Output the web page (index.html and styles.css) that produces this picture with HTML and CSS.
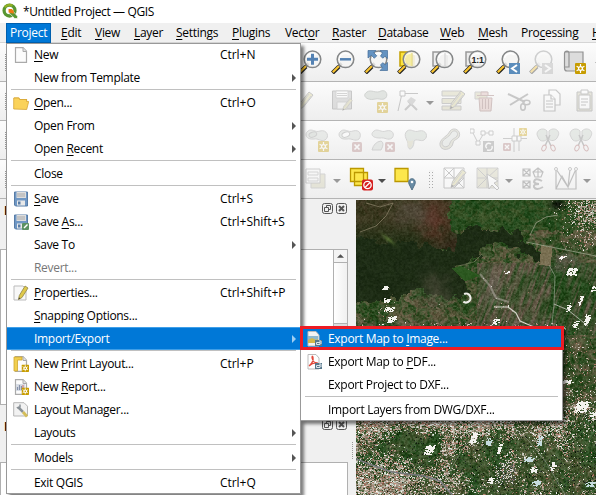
FILE: index.html
```html
<!DOCTYPE html>
<html lang="en">
<head>
<meta charset="utf-8">
<title>*Untitled Project — QGIS</title>
<link rel="stylesheet" href="styles.css">
</head>
<body>
<svg class="defs" width="0" height="0">
  <defs>
    <symbol id="lens" viewBox="0 0 24 24">
      <path d="M1.500 23 8 16.500" stroke="#222" stroke-width="4"/><path d="M1.800 22.200 8 16" stroke="#f8c431" stroke-width="2.200"/>
      <path d="M8 16l2.600-2.600" stroke="#222" stroke-width="3"/>
      <circle cx="14.500" cy="9.300" r="8.300" fill="#f5f5f4" fill-opacity=".88" stroke="#858788" stroke-width="1.500"/>
      <path d="M8.500 8c1-4 6-6 10-3" fill="none" stroke="#fff" stroke-width="1.500"/>
    </symbol>
    <symbol id="star" viewBox="0 0 11 11">
      <rect width="11" height="11" rx="1" fill="#c79c00"/>
      <path d="M5.500 1v9M1.600 3.200l7.800 4.600M9.400 3.200 1.600 7.800" stroke="#fff" stroke-width="1.200"/><circle cx="5.500" cy="5.500" r="2.500" fill="#fff"/><circle cx="5.500" cy="5.500" r="1.200" fill="#c79c00"/>
    </symbol>
    <symbol id="cross" viewBox="0 0 10 10">
      <rect width="10" height="10" rx="1.500" fill="#b08080"/><path d="M2.500 2.500l5 5M7.500 2.500l-5 5" stroke="#fff" stroke-width="1.700"/>
    </symbol>
    <symbol id="pencil" viewBox="0 0 20 20">
      <path d="M1 19l1.500-6L12 1l4 3L6.500 16z" fill="#d5cf90" stroke="#777" stroke-width="1"/><path d="M3 15l9-12M5 17l9-12" stroke="#999" fill="none"/><path d="M1 19l.8-3 2 1.600z" fill="#333"/>
    </symbol>
    <symbol id="caret" viewBox="0 0 8 4"><path d="M0 0h8L4 4z" fill="currentColor"/></symbol>
    <symbol id="page" viewBox="0 0 16 16"><path d="M2.500 .7h7.500l3.500 3.600v11H2.500z" fill="#fcfcfc" stroke="#aaa" stroke-width="1.200"/><path d="M10 .7v3.800h3.500" fill="#e3e3e3" stroke="#aaa"/></symbol>
    <symbol id="floppy" viewBox="0 0 16 16">
      <path d="M1.500 1h13v14h-12l-1-1z" fill="#6f97c4" stroke="#587ca6"/><rect x="3.500" y="1" width="9.500" height="6" fill="#ddd"/><path d="M4 3h8M4 5h8" stroke="#aaa"/><rect x="4" y="9.500" width="8" height="5" fill="#e9e9e9"/><rect x="5" y="10.500" width="2.500" height="3" fill="#587ca6"/>
    </symbol>
    <symbol id="stamp" viewBox="0 0 8 8"><path d="M0 1h7v6H0z" fill="#56768a"/><path d="M1.500 3.500h3.500v2H1.500zM4 2h2v3" fill="none" stroke="#dce6eb"/></symbol>
  </defs>
</svg>

<div class="window">
  <header class="titlebar">
    <svg class="logo" viewBox="0 0 17 17"><circle cx="8" cy="8" r="5.800" fill="none" stroke="#589632" stroke-width="3.500"/><path d="M3 4.500a6 6 0 0 1 8-1.500" fill="none" stroke="#93b023" stroke-width="2.500"/><path d="M8 8h3l5.500 6v2.500h-3L8 11z" fill="#589632" stroke="#fff" stroke-width=".7"/><path d="M7 6.500h3.500l2 2v3L7 10z" fill="#ee7913"/></svg>
    <span>*Untitled Project — QGIS</span>
  </header>
  <nav class="menubar">
    <span class="current">Project</span><span><u>E</u>dit</span><span><u>V</u>iew</span><span><u>L</u>ayer</span><span><u>S</u>ettings</span><span><u>P</u>lugins</span><span>Vect<u>o</u>r</span><span><u>R</u>aster</span><span><u>D</u>atabase</span><span><u>W</u>eb</span><span><u>M</u>esh</span><span>Pro<u>c</u>essing</span><span><u>H</u>elp</span>
  </nav>

  <div class="toolbar first">
    <i class="grip"></i>
    <svg viewBox="0 0 24 24"><use href="#lens"/><path d="M9 9.300h11M14.500 3.800v11" stroke="#5482b3" stroke-width="3"/></svg>
    <svg viewBox="0 0 24 24"><use href="#lens"/><path d="M9 9.300h11" stroke="#5482b3" stroke-width="2.500"/></svg>
    <svg viewBox="0 0 24 24"><use href="#lens"/><g fill="#6593c1" stroke="#426c98" stroke-width=".7"><path d="M4 .5h8L9.800 2.800l3 3-2.500 2.500-3-3L4 8z"/><path d="M23.500.5v8L21.200 6.200l-2.500 2-2.200-2.200 2-3L16 .5z"/><path d="M23.500 20.500v-8l-2.300 2.200-2.500-2-2.200 2.200 2 3-2.500 2.600z"/></g></svg>
    <svg viewBox="0 0 24 24"><path d="M3 2h14v14H3z" fill="#fde43f" stroke="#c4a000" stroke-width="1.500"/><use href="#lens"/><path d="M15 3v13" stroke="#d7c970"/><path d="M9 5l6-2v13q-7-1-7-7z" fill="#f5e887" opacity=".65"/></svg>
    <svg viewBox="0 0 24 24"><path d="M3 2h14v14H3z" fill="#eee" stroke="#999" stroke-width="1.500"/><use href="#lens"/><path d="M15 3v13" stroke="#ccc"/></svg>
    <svg viewBox="0 0 24 24"><path d="M3 2h14v14H3z" fill="#ececec" stroke="#999" stroke-width="1.500"/><use href="#lens"/><text class="ratio" x="14.600" y="13" text-anchor="middle">1:1</text></svg>
    <svg viewBox="0 0 24 24"><use href="#lens"/><path d="M13 13h11v11H13z" fill="#5b8dbc"/><path d="M21 15l-5 3.500 5 3.500" fill="none" stroke="#fff" stroke-width="2"/></svg>
    <svg class="off" viewBox="0 0 24 24"><use href="#lens"/><path d="M13 13h11v11H13z" fill="#aaa"/><path d="M16 15l5 3.500-5 3.500" fill="none" stroke="#fff" stroke-width="2"/></svg>
    <svg viewBox="0 0 24 24"><path d="M3 2h18v19H5q-2.500 0-2.500-3V3.500Q2.500 1 5 1q2 0 2 2.500V17H3" fill="#dcdcdc" stroke="#929292" stroke-width="1.200"/><use href="#star" x="13" y="13" width="11" height="11"/></svg>
    <svg class="caret" viewBox="0 0 8 4"><use href="#caret"/></svg>
  </div>

  <div class="toolbar second">
    <i class="grip"></i>
    <svg class="off" viewBox="0 0 24 24"><use href="#pencil" x="-1" y="2" width="20" height="20"/></svg>
    <svg class="off" viewBox="0 0 24 24"><path d="M1.500 2h19v18h-19z" fill="#b5b5b5" stroke="#777"/><path d="M5 2h12v7H5z" fill="#fff" stroke="#999"/><path d="M6 4.500h10M6 6.500h10M6 13h10v7H6z" stroke="#999" fill="#eee"/><use href="#pencil" x="11" y="9" width="13" height="13"/></svg>
    <svg class="off" viewBox="0 0 24 24"><path d="M3 3C7 0 12 5 17 2c6-2 8 6 3 8-3 1-6-1-9 0C4 12-3 7 3 3z" fill="#bbc3bb" stroke="#8b928b"/><use href="#star" x="13" y="13" width="11" height="11"/></svg>
    <svg class="off" viewBox="0 0 24 24"><path d="M5 4.500h16M5 4.500 1 22" stroke="#777" fill="none"/><path d="M3 2h5v5H3z" fill="#fff" stroke="#777"/><path d="M8 21 17 12M11 12l9 9" stroke="#888" stroke-width="2"/><path d="M10 12l4-4 5 3-4 5z" fill="#aaa"/></svg>
    <svg class="caret" viewBox="0 0 8 4"><use href="#caret"/></svg>
    <svg class="off" viewBox="0 0 24 24"><path d="M1 2h19v5H1zM1 9.500h19v5H1zM1 17h19v4H1z" fill="#d0cca6" stroke="#888"/><use href="#pencil" x="8" y="1" width="20" height="20"/></svg>
    <svg class="off" viewBox="0 0 24 24"><path d="M1 3h12v7H1z" fill="#cfcba6" stroke="#999"/><path d="M3 6.500h17M7 6V3h7v3M5 9h13l-1 13H6z" fill="#d8b3ae" stroke="#946b68"/><path d="M8.500 10v10M11.500 10v10M14.500 10v10" stroke="#946b68"/></svg>
    <svg class="off" viewBox="0 0 24 24"><path d="M1 5l17 8M3 16l18-11" stroke="#777" stroke-width="2"/><ellipse cx="19.500" cy="13.500" rx="3.500" ry="2.200" fill="none" stroke="#777" stroke-width="1.500"/><ellipse cx="16" cy="18" rx="2.300" ry="3.200" fill="none" stroke="#777" stroke-width="1.500"/></svg>
    <svg class="off" viewBox="0 0 24 24"><g fill="#fff" stroke="#777" stroke-width="1.200"><path d="M9 1h7l4 4v11H9z"/><path d="M4 6h7l4 4v12H4z"/><path d="M11 6v4h4M6 12h7M6 15h7M6 18h7"/></g></svg>
    <svg class="off" viewBox="0 0 24 24"><path d="M4 3h15v19H4z" fill="#c9c6ad" stroke="#777"/><path d="M6 6h11v14H6zM8 1h7v4H8z" fill="#fff" stroke="#777"/><path d="M8 10h7M8 13h7M8 16h5" stroke="#777"/></svg>
  </div>

  <div class="toolbar third">
    <i class="grip"></i>
    <svg class="off" viewBox="0 0 24 24"><path d="M3 3c4-3 7 2 12 0 7-2 10 6 5 9-4 2-7-2-11-1C1 12-1 6 3 3z" fill="#ccd1cc" stroke="#999"/><ellipse cx="8" cy="6.500" rx="4" ry="2.500" fill="#bdc5bd" stroke="#8b8b8b" transform="rotate(-20 8 7)"/><use href="#star" x="13" y="13" width="11" height="11"/></svg>
    <svg class="off" viewBox="0 0 24 24"><path d="M3 3c4-3 7 2 12 0 7-2 9 4 6 8-4 3-7-1-12 0C1 12-1 6 3 3z" fill="#ccd1cc" stroke="#999"/><ellipse cx="8" cy="6.500" rx="4" ry="2.500" fill="#fff" stroke="#8b8b8b" transform="rotate(-20 8 7)"/><use href="#cross" x="14" y="14" width="10" height="10"/></svg>
    <svg class="off" viewBox="0 0 24 24"><path d="M3 3c4-3 7 2 12 0 7-2 9 4 6 7-4 3-7-1-12 0C1 10-1 6 3 3zM1 22q2-8 9-9 4 2 0 9z" fill="#ccd1cc" stroke="#999"/><use href="#cross" x="14" y="14" width="10" height="10"/></svg>
    <svg class="off" viewBox="0 0 24 24"><path d="M3 3c4-3 7 2 12 0 7-2 10 6 5 9-3 2-8-2-10 1 0 8-6 11-6 4 1-4-6-9-1-14z" fill="#c5cec5" stroke="#999"/><path d="M3 11q2 4 6 1c0 8-5 10-5 6z" fill="#ccc8aa"/></svg>
    <svg class="off" viewBox="0 0 24 24"><path d="M13 3c4-5 12 0 9 6-2 3-5 2-6 6-1 8-14 9-13 0 2-6 7-6 10-12z" fill="#c9c9b5" stroke="#888"/><path d="M14 5c4-5 8 0 6 3-2 3-5 2-7 7-1 5-8 5-8 0 1-5 7-5 9-10z" fill="#d8ddd8" stroke="#888"/></svg>
    <svg class="off" viewBox="0 0 24 24"><path d="M2 3l6 12 6-10h8" fill="none" stroke="#888"/><path d="M0 1h4v4H0zM6 13h4v4H6zM11 3h4v4h-4zM19 3h4v4h-4z" fill="#fff" stroke="#888"/><path d="M13 13h11v11H13z" fill="#888"/><path d="M21 16c-4-3-7 3-4 4m0 2c4 1 6-1 5-4" fill="none" stroke="#fff" stroke-width="1.500"/></svg>
    <svg class="off" viewBox="0 0 24 24"><path d="M11 0v24M0 10.500h24M16 10v13" stroke="#888" fill="none"/><path d="M9 8h5v5H9zM14 8h4v5h-4z" fill="#fff" stroke="#888"/><use href="#star" x="16" y="0" width="8" height="8"/><use href="#cross" x="0" y="15" width="8" height="8"/></svg>
    <svg class="off" viewBox="0 0 24 24"><path d="M11 3C7-2-2 3 2 9c2 6 8 4 9 2zM13 3c5-5 12 0 9 5-2 6-8 5-9 3z" fill="#c6cfc6" stroke="#999"/><path d="M10 7l5 11M14 7 9 18" stroke="#777" stroke-width="1.500"/><ellipse cx="8" cy="20" rx="2" ry="3" fill="none" stroke="#a66" transform="rotate(25 8 20)"/><ellipse cx="17" cy="20" rx="2" ry="3" fill="none" stroke="#a66" transform="rotate(-25 17 20)"/></svg>
    <svg class="off" viewBox="0 0 24 24"><path d="M11 3C7-2-2 3 2 9c2 6 8 4 9 2zM13 3c5-5 12 0 9 5-2 6-8 5-9 3z" fill="#c6cfc6" stroke="#999"/><path d="M10 7l5 11M14 7 9 18" stroke="#777" stroke-width="1.500"/><ellipse cx="8" cy="20" rx="2" ry="3" fill="none" stroke="#a66" transform="rotate(25 8 20)"/><ellipse cx="17" cy="20" rx="2" ry="3" fill="none" stroke="#a66" transform="rotate(-25 17 20)"/></svg>
  </div>

  <div class="toolbar fourth">
    <i class="grip"></i>
    <svg class="off" viewBox="0 0 24 24"><path d="M7 7h14v14H7z" fill="#ccc9a8" stroke="#999"/><path d="M2 2h14v14H2z" fill="#f6f6f6" stroke="#888"/><path d="M4 5h10v3H4zM4 11h10v3H4z" fill="none" stroke="#999"/></svg>
    <svg class="caret dim" viewBox="0 0 8 4"><use href="#caret"/></svg>
    <svg viewBox="0 0 24 24"><path d="M1.500 1.500h13v13h-13zM5.500 5.500h13v13h-13z" fill="#fde74c" stroke="#bb9800" stroke-width="1.300"/><rect x="13" y="12.500" width="11" height="11" rx="2" fill="#d51f1f"/><circle cx="18.500" cy="18" r="3.700" fill="none" stroke="#fff" stroke-width="1.300"/><path d="M16 20.500l5-5" stroke="#fff" stroke-width="1.300"/></svg>
    <svg class="caret" viewBox="0 0 8 4"><use href="#caret"/></svg>
    <svg viewBox="0 0 24 24"><path d="M2 1.500h13v13H2z" fill="#fde74c" stroke="#bb9800" stroke-width="1.300"/><path d="M19 23l-3-6c-2-7 8-7 6 0z" fill="#698ca5" stroke="#527188"/><circle cx="19" cy="15" r="1.300" fill="#fff"/></svg>
    <i class="dots"></i>
    <svg class="off" viewBox="0 0 24 24"><path d="M1 1h20v20H1zM1 11h20M11 1v20M1 1l20 20M11 1 1 11M21 11 11 21" fill="#fff" stroke="#777"/><use href="#pencil" x="7" y="1" width="20" height="21"/></svg>
    <svg class="off" viewBox="0 0 24 24"><path d="M1 1h21v20H1z" fill="#cecbad" stroke="#999"/><path d="M1 11h21M11 1v20M1 1l10 10L22 1M1 21l10-10" stroke="#888"/><path d="M11 7l2 15 3-4 5 5 2-2-5-5 4-2z" fill="#fff" stroke="#777"/></svg>
    <svg class="caret dim" viewBox="0 0 8 4"><use href="#caret"/></svg>
    <svg class="off" viewBox="0 0 24 24"><path d="M2 2h7v7H2zM2 2l7 7M9 2 2 9M2 14h7v7H2zM2 14l7 7M9 14l-7 7M17 1l5 4-2 5h-6l-2-5zM17 1v9M12 5h10" fill="none" stroke="#666" stroke-width="1.200"/><path d="M21 14q-7-4-8 1 1 2 5 2-6 0-5 3 2 4 9 0" fill="none" stroke="#777" stroke-width="2"/></svg>
    <svg class="off" viewBox="0 0 24 24"><path d="M2 2v20h20V2L14 20 2 2M2 22 8 9l6 11 2-18" fill="none" stroke="#666" stroke-width="1.200"/><g fill="#fff" stroke="#777"><circle cx="2" cy="2" r="1.500"/><circle cx="16" cy="2" r="1.500"/><circle cx="22" cy="2" r="1.500"/></g></svg>
    <svg class="caret dim" viewBox="0 0 8 4"><use href="#caret"/></svg>
  </div>

  <main class="workspace">
    <div class="docks">
      <section class="dock upper">
        <div class="dock-title"><b>Layers</b><svg class="float" viewBox="0 0 25 11"><g fill="none" stroke="#555"><rect x=".5" y=".5" width="10" height="10" rx="2"/><path d="M4.500 4V2.500h4v4H7M2.500 4.500h4v4h-4z"/><rect x="14.500" y=".5" width="10" height="10" rx="2"/><path d="M17 3l5 5M22 3l-5 5" stroke-width="2"/></g></svg></div>
        <div class="panel"><div class="scroll"><div class="scroll-button"><svg viewBox="0 0 8 4"><path d="M0 4h8L4 0z" fill="#505050"/></svg></div><div class="thumb"></div></div></div>
      </section>
      <section class="dock lower">
        <div class="dock-title"><b>Layers</b><svg class="float" viewBox="0 0 25 11"><g fill="none" stroke="#555"><rect x=".5" y=".5" width="10" height="10" rx="2"/><path d="M4.500 4V2.500h4v4H7M2.500 4.500h4v4h-4z"/><rect x="14.500" y=".5" width="10" height="10" rx="2"/><path d="M17 3l5 5M22 3l-5 5" stroke-width="2"/></g></svg></div>
        <i class="grip side"></i>
        <div class="panel"></div>
      </section>
    </div>
    <canvas class="map" id="map" width="240" height="296"></canvas>
  </main>

  <div class="menu project">
    <div class="item"><svg viewBox="0 0 16 16"><use href="#page"/></svg><span><u>N</u>ew</span><kbd>Ctrl+N</kbd></div>
    <div class="item more"><span>New from Template</span></div>
    <hr>
    <div class="item"><svg viewBox="0 0 16 16"><path d="M1 2.500h5l1 1.500h7v3H3L1 14z" fill="#dba92e"/><path d="M.7 14V3h5l1 1.500h7v2h2l-2 8z" fill="#fad25a" stroke="#d5a638" stroke-width=".8"/></svg><span><u>O</u>pen...</span><kbd>Ctrl+O</kbd></div>
    <div class="item more"><span>Open From</span></div>
    <div class="item more"><span>Open <u>R</u>ecent</span></div>
    <hr>
    <div class="item"><span>Close</span></div>
    <hr>
    <div class="item"><svg viewBox="0 0 16 16"><use href="#floppy"/></svg><span><u>S</u>ave</span><kbd>Ctrl+S</kbd></div>
    <div class="item"><svg viewBox="0 0 16 16"><use href="#floppy"/><rect x="9" y="9" width="7" height="7" rx="1" fill="#5b9263"/><path d="M11 14l3.500-3.500" stroke="#fff" stroke-width="1.500"/></svg><span>Save <u>A</u>s...</span><kbd>Ctrl+Shift+S</kbd></div>
    <div class="item more"><span>Save To</span></div>
    <div class="item disabled"><span>Revert...</span></div>
    <hr>
    <div class="item"><svg viewBox="0 0 16 16"><path d="M1 1h9l3 3v11H1z" fill="#f8f8f8" stroke="#bbb"/><path d="M5.500 14.500l.8-4L12 1l3 2-6 9.500z" fill="#e0c94a" stroke="#8f8548" stroke-width=".8"/><path d="M5.500 14.500l.5-2 1.300.8z" fill="#333"/></svg><span><u>P</u>roperties...</span><kbd>Ctrl+Shift+P</kbd></div>
    <div class="item"><span><u>S</u>napping Options...</span></div>
    <div class="item more active"><span>Import/Export</span></div>
    <hr>
    <div class="item"><svg viewBox="0 0 16 16"><use href="#page"/><path d="M1 1h8v3H4.500v11H1z" fill="#f1cf50" stroke="#d0a72c" stroke-width=".8"/><use href="#star" x="8.500" y="8.500" width="7.500" height="7.500"/></svg><span>New <u>P</u>rint Layout...</span><kbd>Ctrl+P</kbd></div>
    <div class="item"><svg viewBox="0 0 16 16"><use href="#page"/><path d="M3 5h9v7H3z" fill="#d7dce4"/><path d="M4.500 11V8M6.500 11V6M8.500 11V7" stroke="#8591a9" stroke-width="1.200"/><path d="M10 6v4" stroke="#d07070"/><use href="#star" x="8.500" y="8.500" width="7.500" height="7.500"/></svg><span>New <u>R</u>eport...</span></div>
    <div class="item"><svg viewBox="0 0 16 16"><path d="M.7.7H11l3.500 3.500V14H.7z" fill="#f2f2f2" stroke="#b5b5b5"/><path d="M5 5l5 5" stroke="#899096" stroke-width="2.500"/><path d="M4 5q1 2 3 0V2.500" fill="none" stroke="#899096" stroke-width="1.500"/><path d="M10 10l4 4.500" stroke="#d4bd58" stroke-width="2.800"/></svg><span>Layout Manager...</span></div>
    <div class="item more"><span>Layouts</span></div>
    <hr>
    <div class="item more"><span>Models</span></div>
    <hr>
    <div class="item"><span>Exit QGIS</span><kbd>Ctrl+Q</kbd></div>
  </div>

  <div class="menu export">
    <div class="item active"><svg viewBox="0 0 16 16"><path d="M1 .5h8l3 3.500V15H1z" fill="#f3f3f3" stroke="#bbb"/><path d="M1 5h10v7H1z" fill="#8fb8cd"/><path d="M1 12V9l4-2 4 2 2-1v4z" fill="#d4b849"/><use href="#stamp" x="8" y="8" width="8" height="8"/></svg><span>Export Map to <u>I</u>mage...</span></div>
    <div class="item"><svg viewBox="0 0 16 16"><path d="M1 .5h8l3 3.500V15H1z" fill="#fff" stroke="#bbb"/><path d="M2 12Q7 8 6 3q-1-2-1 1 1 5 6 5-5-1-9 3z" fill="none" stroke="#e14a3c" stroke-width="1.200"/><use href="#stamp" x="8" y="8" width="8" height="8"/></svg><span>Export Map to <u>P</u>DF...</span></div>
    <div class="item"><span>Export Project to DXF...</span></div>
    <hr>
    <div class="item"><span>Import Layers from DWG/DXF...</span></div>
  </div>
  <div class="highlight"></div>
</div>
<script src="map.js"></script>
</body>
</html>
```
FILE: styles.css
```css
* { box-sizing: border-box; }
body { margin: 0; font: 12px/16px "Open Sans", "Noto Sans", sans-serif; letter-spacing: -.3px; color: #000; }
.defs { position: absolute; }
.window { position: relative; width: 596px; height: 495px; overflow: hidden; background: #f0f0f0; display: flex; flex-direction: column; }
u { text-decoration: underline; text-decoration-thickness: 1px; text-underline-offset: 2px; }

.titlebar { height: 23px; flex: none; background: #fff; display: flex; align-items: center; padding-left: 2px; gap: 5px; letter-spacing: -.37px; }
.logo { width: 16px; height: 16px; margin-top: -2px; }

.menubar { height: 20px; flex: none; display: grid; grid-template-columns: 48px 34px 39px 42px 56px 53px 47px 46px 62px 38px 43px 71px 40px; padding-left: 6px; width: 640px; border-bottom: 1px solid #d5d5d5; letter-spacing: -.28px; }
.menubar span { padding: 2px 0 0 7px; white-space: nowrap; }
.menubar .current { background: #0078d7; color: #fff; border: 1px solid #005fad; padding: 1px 0 0 3px; width: 45px; height: 20px; }

.toolbar { flex: none; height: 39px; display: flex; align-items: center; background: linear-gradient(#fcfcfc, #eee); border-bottom: 1px solid #b4b4b4; white-space: nowrap; width: 640px; }
.toolbar svg { width: 24px; height: 24px; flex: none; margin-right: 9px; fill: none; }
.toolbar .off { opacity: .36; }
.toolbar svg.caret { width: 8px; height: 4px; margin: 3px 7px 0 -4px; color: #888; }
.toolbar .off + svg.caret { color: #999; }
.first svg.caret { margin-left: 0; }
.fourth svg.caret { margin-right: 8px; color: #4d4d4d; }
.fourth svg.caret.dim { color: #999; }
.fourth svg:not(.off) + svg.caret { margin-right: 7px; }
.grip { width: 1px; height: 17px; margin: 0 292px 0 5px; background: repeating-linear-gradient(#999 0 1px, transparent 1px 2px); flex: none; }
.third .grip { margin-right: 299px; }
.fourth .grip { margin-right: 298px; }
.dots { width: 5px; height: 18px; margin: 0 9px 0 3px; flex: none; background: repeating-linear-gradient(#f4f4f4 0 2px, transparent 2px 3px), linear-gradient(90deg, #aaa 1px, transparent 1px 3px, #aaa 3px 4px, transparent 4px); }
.ratio { font: bold 9px "Liberation Sans", sans-serif; letter-spacing: -.3px; fill: #222; }

.workspace { flex: 1; display: flex; min-height: 0; }
.docks { width: 356px; flex: none; display: flex; flex-direction: column; }
.dock { display: flex; flex-direction: column; position: relative; }
.upper { height: 206px; }
.lower { flex: 1; padding-top: 7px; }
.dock-title { height: 50px; padding: 4px 9px 0 4px; display: flex; justify-content: space-between; }
.lower .dock-title { padding-top: 7px; }
.float { width: 25px; height: 11px; }
.panel { flex: 1; margin-right: 8px; background: #fff; border: 1px solid #b0b0b0; display: flex; justify-content: flex-end; }
.lower .panel { border-bottom: 0; }
.scroll { width: 14px; border-left: 1px solid #b0b0b0; display: flex; flex-direction: column; background: #ddd; }
.scroll-button { height: 13px; display: flex; align-items: center; justify-content: center; background: #f4f4f4; border-bottom: 1px solid #b0b0b0; }
.scroll-button svg { width: 7px; height: 4px; }
.thumb { height: 61px; background: linear-gradient(90deg, #fff, #f0f0f0); border-bottom: 1px solid #b0b0b0; }
.side { position: absolute; right: 3px; top: 37px; margin: 0; }
.map { display: block; width: 240px; height: 296px; margin-top: 1px; }

.menu { position: absolute; background: #fff; border: 1px solid #999; box-shadow: 3px 3px 3px rgba(0, 0, 0, .5); }
.project { left: 6px; top: 43px; width: 295px; height: 451px; }
.export { left: 300px; top: 326px; width: 263px; height: 95px; }
.item { height: 23px; display: flex; align-items: center; position: relative; padding-left: 27px; white-space: nowrap; }
.project .item:first-child { margin-top: -1px; }
.item svg { position: absolute; left: 6px; top: 4px; width: 16px; height: 16px; }
.item kbd { position: absolute; left: 213px; font: inherit; letter-spacing: -.04px; }
.more::after { content: ""; position: absolute; right: 4px; top: 8px; border: 4px solid transparent; border-left-color: #555; border-right: 0; }
.active { background: #0078d7; color: #fff; }
.project .active { box-shadow: inset 0 1px #3f9fe8, inset 0 -1px #3f9fe8; }
.project .active::after { border-left-color: #9fcdf2; }
.disabled { color: #777; }
hr { margin: 0 4px 1px; border: 0; height: 1px; background: #c0c0c0; }
.highlight { position: absolute; left: 300px; top: 326px; width: 264px; height: 24px; border: 3px solid #ed1c24; }
```
FILE: map.js
```js
(function () {
  const canvas = document.getElementById('map');
  const ctx = canvas.getContext('2d');
  const W = 240, H = 296;
  let seed = 91357;
  const rnd = () => ((seed = (Math.imul(seed, 1664525) + 1013904223) >>> 0) / 4294967296);

  function hash(x, y, s) {
    let h = (Math.imul(x, 374761393) + Math.imul(y, 668265263) + Math.imul(s, 974634777)) | 0;
    h = Math.imul(h ^ (h >>> 13), 1274126177);
    h = Math.imul(h ^ (h >>> 15), 2246822519);
    return ((h ^ (h >>> 16)) >>> 0) / 4294967296;
  }
  function noise(x, y, s) {
    const i = Math.floor(x), j = Math.floor(y);
    let u = x - i, v = y - j;
    u = u * u * (3 - 2 * u); v = v * v * (3 - 2 * v);
    const a = hash(i, j, s), b = hash(i + 1, j, s), c = hash(i, j + 1, s), d = hash(i + 1, j + 1, s);
    return a + (b - a) * u + (c - a) * v + (a - b - c + d) * u * v;
  }
  function inside(poly, x, y) {
    let r = false;
    for (let i = 0, j = poly.length - 1; i < poly.length; j = i++) {
      const [a, b] = poly[i], [c, d] = poly[j];
      if (b > y !== d > y && x < (c - a) * (y - b) / (d - b) + a) r = !r;
    }
    return r;
  }
  const clamp = t => Math.max(0, Math.min(1, t));
  const blob = (x, y, cx, cy, rx, ry) => Math.exp(-(((x - cx) / rx) ** 2 + ((y - cy) / ry) ** 2));
  const mix = (a, b, t) => a.map((v, k) => v + (b[k] - v) * t);

  // land cover outlines
  const forest = [[-20, 36], [25, 38], [40, 46], [62, 44], [92, 52], [102, 28], [130, 25], [152, 31], [166, 34], [176, 46], [190, 50], [188, 63], [170, 58], [155, 46], [132, 44], [118, 60], [98, 66], [112, 90], [100, 98], [82, 97], [62, 88], [48, 92], [28, 101], [-20, 103]];
  const field = [[96, 68], [104, 65], [124, 75], [108, 81]];
  const fallow = [[185, 44], [196, 48], [194, 66], [183, 64]];
  const upland = [[-20, -20], [98, -20], [90, 26], [106, 34], [96, 50], [62, 50], [30, 46], [-20, 42]];
  const bright = [[200, 165, 155], [190, 125, 112], [228, 224, 218], [164, 152, 140], [140, 122, 106], [218, 192, 184], [245, 245, 243]];

  const img = ctx.createImageData(W, H);
  for (let y = 0; y < H; y++) for (let x = 0; x < W; x++) {
    const jx = x + (noise(x / 7, y / 7, 1) - .5) * 12 + (noise(x / 2, y / 2, 21) - .5) * 4;
    const jy = y + (noise(x / 7, y / 7, 2) - .5) * 12 + (noise(x / 2, y / 2, 22) - .5) * 4;
    const n = noise(x / 13, y / 13, 3), p = noise(jx / 3.5, jy / 3.5, 4), q = noise(x / 1.6, y / 1.6, 5);
    let c = mix([38, 72, 28], [101, 93, 68], clamp((n * .5 + p * .8 - .4) * 1.7));
    let texture = 26;
    if (x > 120 && y > 62 && y < 135) {
      const stripe = noise((x * .93 + y * .36) / 1.6, (y * .93 - x * .36) / 16, 6);
      c = mix([34, 72, 26], [103, 90, 74], clamp(stripe * 1.1 + (x < 195 ? .05 : -.3) + (n - .5) * .5));
    }
    if (y < 30 && x > 84) { c = mix([27, 70, 24], [73, 87, 46], p * .8); texture = 22; }
    if (y > 205) { c = mix([40, 78, 33], [104, 96, 68], clamp(n * .7 + p * .5 - .3)); texture = 34; }
    if (inside(upland, jx, jy)) {
      c = mix([50, 52, 26], [68, 60, 38], p);
      c = mix(c, [34, 48, 22], clamp((y - 18) / 20) * .75);
      c = mix(c, [94, 52, 40], blob(jx, jy, 77, 18, 13, 20) * .85);
      c = mix(c, [90, 80, 68], blob(jx, jy, 57, 12, 17, 12) * .7);
      c = mix(c, [62, 40, 30], blob(jx, jy, 92, 42, 12, 9) * .6);
      texture = 16;
    }
    if (inside(forest, jx, jy)) { c = mix([25, 39, 18], [35, 51, 25], p * .8); texture = 9; }
    const glade = blob(x, y, 32, 39, 7, 3 + Math.abs(x - 32) * .8) * (1 - clamp(Math.abs(y - 39 - (x - 32) * .9) / 5));
    c = mix(c, [78, 100, 46], clamp(glade * 1.2));
    if (inside(field, x, y)) { c = [44, 88, 32]; texture = 8; }
    if (inside(fallow, x, y)) { c = [122, 112, 82]; texture = 16; }
    c = mix(c, [84, 80, 64], blob(jx, jy, 78, 92, 15, 16) * .65);
    c = mix(c, [112, 104, 92], blob(jx, jy, 135, 86, 6, 14) * .8);
    c = mix(c, [100, 92, 82], blob(jx, jy, 208, 64, 13, 7) * .8);
    c = mix(c, [18, 24, 14], blob(x, y, 201, 4, 7, 5));

    let urban = blob(x, y, 234, 12, 27, 28) * .6 + blob(x, y, 235, 45, 28, 8) * .2;
    urban += blob(x, y, 30, 106, 9, 18) * .1 + blob(x, y, 144, 107, 14, 9) * .2 + blob(x, y, 210, 66, 16, 10) * .12;
    if (y > 70 && x > 120) urban += .025;
    if (y > 100 && x < 120) urban += .035;
    if (y > 122) urban += .14 + blob(x, y, 222, 205, 35, 25) * .16;
    if (y > 205) {
      const cluster = noise(jx / 13, jy / 13, 12);
      urban += Math.max(0, cluster - .3) * .5 + blob(x, y, 22, 280, 70, 28) * .42;
      urban += blob(x, y, 30, 222, 65, 12) * .4 + blob(x, y, 120, 224, 75, 10) * .4 + blob(x, y, 90, 252, 7, 22) * .4;
      urban -= blob(x, y, 52, 241, 22, 15) * .5 + blob(x, y, 112, 268, 15, 13) * .3 + blob(x, y, 70, 256, 18, 12) * .35;
    }
    const cell = hash(x, y, 16) * .55 + hash(x >> 1, y >> 1, 15) * .45;
    if (cell < urban) {
      const hue = bright[Math.floor(hash(x >> 1, y, 30) * bright.length)];
      c = mix(c, hue, .55 + rnd() * .45);
    } else if (y > 205 && rnd() < .05) c = [28, 38, 26];
    const d = (q - .5) * texture * 1.5 + (rnd() - .5) * texture * .5, k = (y * W + x) * 4;
    img.data[k] = c[0] + d; img.data[k + 1] = c[1] + d; img.data[k + 2] = c[2] + d; img.data[k + 3] = 255;
  }
  ctx.putImageData(img, 0, 0);

  function line(points, color, width) {
    ctx.strokeStyle = color; ctx.lineWidth = width; ctx.lineJoin = 'round'; ctx.beginPath();
    points.forEach(([x, y], i) => i ? ctx.lineTo(x, y) : ctx.moveTo(x, y));
    ctx.stroke();
  }
  // roads
  line([[10, 3], [24, 7], [37, 3], [30, 16], [20, 26], [4, 32]], 'rgba(165,155,130,.55)', 1);
  line([[174, 35], [180, 23], [190, 17], [202, 15]], 'rgba(170,170,150,.7)', 1);
  line([[170, 42], [200, 48], [240, 56]], 'rgba(160,170,145,.7)', 1);
  line([[193, 65], [199, 76], [198, 104], [196, 125]], 'rgba(180,183,170,.7)', .8);
  line([[198, 104], [212, 110], [232, 126]], 'rgba(215,215,210,.7)', 1);
  line([[138, 107], [152, 107], [160, 113], [164, 121], [178, 127]], 'rgba(235,233,225,.85)', 1.2);
  line([[124, 74], [134, 86], [140, 98], [153, 102]], 'rgba(170,165,155,.6)', 2);
  line([[102, 66], [118, 62], [126, 54]], 'rgba(150,150,125,.45)', 1);
  line([[-2, 258], [13, 264], [36, 272], [68, 276], [84, 281], [97, 296]], '#777a7e', 1.5);
  line([[88, 281], [106, 250], [116, 238]], 'rgba(170,170,155,.5)', 1);
  line([[150, 220], [172, 240], [190, 262], [210, 296]], 'rgba(170,175,165,.5)', 1);

  // large roofs
  ctx.strokeStyle = '#efeeea'; ctx.lineWidth = 2.2;
  ctx.beginPath(); ctx.arc(110, 98, 4.5, -2, 2.2); ctx.stroke();
  const roofs = [[27, 86, 5, 4], [28, 98, 6, 4], [29, 107, 8, 4], [32, 116, 8, 6], [137, 119, 6, 5], [148, 71, 5, 2], [212, 103, 3, 8], [224, 96, 3, 9], [230, 114, 4, 11], [236, 86, 4, 5], [218, 121, 4, 6], [204, 56, 5, 3], [212, 68, 9, 7], [221, 201, 12, 11], [234, 212, 6, 4], [205, 180, 10, 3], [116, 232, 6, 11], [131, 238, 5, 7], [70, 245, 8, 9], [183, 235, 4, 10], [143, 243, 3, 10], [168, 257, 10, 4], [175, 267, 6, 5], [177, 280, 7, 6], [133, 277, 4, 6], [230, 282, 8, 4], [196, 262, 4, 8]];
  roofs.forEach(([x, y, w, h], i) => {
    for (let k = 0; k < w * h * 1.3; k++) {
      ctx.fillStyle = y > 210 && i % 2 ? '#c6dcdf' : '#f3f2ee';
      const v = rnd() * h;
      ctx.fillRect(Math.round(x + rnd() * w - v * .3), Math.round(y + v), 1 + (rnd() < .4), 1);
    }
  });
  for (let k = 0; k < 190; k++) {
    const u = rnd() * 20, v = rnd() * 22;
    ctx.fillStyle = rnd() < .5 ? '#d6d3cd' : '#46524a';
    ctx.fillRect(Math.round(139 + u), Math.round(263 + v - u * .1), 1, 1);
  }
})();
```
